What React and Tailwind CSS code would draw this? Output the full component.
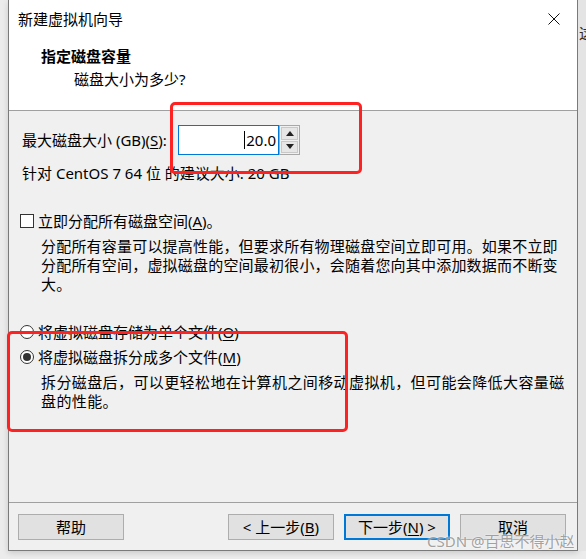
import React from "react";

// accelerator letter, underlined like a Windows dialog
const U = ({ children }) => <span className="underline underline-offset-2">{children}</span>;

const Radio = ({ checked }) => (
  <span className="w-[14px] h-[14px] rounded-full border border-[#333] bg-white flex items-center justify-center shrink-0">
    {checked && <span className="w-[8px] h-[8px] rounded-full bg-[#333]"></span>}
  </span>
);

const Btn = ({ children, primary }) => (
  <button
    className={
      primary
        ? "w-[106px] h-[26px] bg-[#e1e1e1] border-2 border-[#0078d7] flex items-center justify-center leading-none"
        : "w-[106px] h-[26px] bg-[#e1e1e1] border border-[#adadad] flex items-center justify-center leading-none"
    }
  >
    {children}
  </button>
);

export default function App() {
  return (
    <div className="relative w-[586px] h-[559px] overflow-hidden bg-[#ececec] font-['Noto_Sans','Noto_Sans_CJK_SC',sans-serif] text-[15px] text-black">
      <div className="flex">
        {/* dialog window */}
        <div className="ml-[8px] w-[570px] h-[551px] flex flex-col border-x border-b border-[#7a7a7a] shadow-[0_2px_6px_rgba(0,0,0,0.15)]">
          {/* header */}
          <div className="h-[111px] bg-white border-b border-[#a0a0a0]">
            <div className="h-[38px] flex items-center justify-between pl-[9px] pr-[17px]">
              <span className="leading-[20px]">新建虚拟机向导</span>
              <svg width="12" height="12" viewBox="0 0 12 12">
                <path d="M0.5 0.5L11.5 11.5M11.5 0.5L0.5 11.5" stroke="#111" strokeWidth="1" />
              </svg>
            </div>
            <div className="pl-[32px] mt-[8px] font-bold leading-[20px]">指定磁盘容量</div>
            <div className="pl-[65px] mt-[3px] leading-[20px]">磁盘大小为多少?</div>
          </div>

          {/* body */}
          <div className="flex-1 bg-[#f0f0f0]">
            <div className="mt-[14px] pl-[13px] flex items-center h-[30px]">
              <span className="w-[156px] leading-[20px] whitespace-nowrap">
                最大磁盘大小 (GB)(<U>S</U>):
              </span>
              <div className="w-[101px] h-[30px] bg-white border border-[#0078d7] flex items-center justify-end pr-[2px]">
                <span className="w-px h-[18px] bg-black mr-[1px]"></span>
                <span className="leading-none">20.0</span>
              </div>
              <div className="w-[21px] h-[30px] border border-[#a8a8a8] bg-[#f0f0f0] flex flex-col p-px gap-px">
                <div className="flex-1 bg-[#e6e6e6] border border-[#c8c8c8] flex items-center justify-center">
                  <svg width="8" height="5" viewBox="0 0 8 5"><path d="M0 5L4 0L8 5Z" fill="#222" /></svg>
                </div>
                <div className="flex-1 bg-[#e6e6e6] border border-[#c8c8c8] flex items-center justify-center">
                  <svg width="8" height="5" viewBox="0 0 8 5"><path d="M0 0L4 5L8 0Z" fill="#222" /></svg>
                </div>
              </div>
            </div>

            <div className="mt-[8px] pl-[13px] leading-[20px]">针对 CentOS 7 64 位 的建议大小: 20 GB</div>

            <div className="mt-[28px] pl-[11px] h-[20px] flex items-center gap-[4px]">
              <span className="w-[14px] h-[14px] border border-[#333] bg-white shrink-0"></span>
              <span className="leading-[20px]">立即分配所有磁盘空间(<U>A</U>)。</span>
            </div>
            <div className="mt-[6px] pl-[32px] leading-[19px] whitespace-nowrap tracking-[0.2px]">
              分配所有容量可以提高性能，但要求所有物理磁盘空间立即可用。如果不立即
              <br />
              分配所有空间，虚拟磁盘的空间最初很小，会随着您向其中添加数据而不断变
              <br />
              大。
            </div>

            <div className="mt-[28px] pl-[11px] h-[20px] flex items-center gap-[4px]">
              <Radio />
              <span className="leading-[20px]">将虚拟磁盘存储为单个文件(<U>O</U>)</span>
            </div>
            <div className="mt-[5px] pl-[11px] h-[20px] flex items-center gap-[4px]">
              <Radio checked />
              <span className="leading-[20px]">将虚拟磁盘拆分成多个文件(<U>M</U>)</span>
            </div>
            <div className="mt-[6px] pl-[32px] leading-[19px] whitespace-nowrap tracking-[0.4px]">
              拆分磁盘后，可以更轻松地在计算机之间移动虚拟机，但可能会降低大容量磁
              <br />
              盘的性能。
            </div>
          </div>

          {/* footer */}
          <div className="h-[48px] bg-[#f0f0f0] border-t border-[#a0a0a0] pt-[11px] pl-[9px] pr-[11px] flex items-start">
            <Btn>帮助</Btn>
            <div className="ml-auto flex gap-[10px]">
              <Btn>&lt; 上一步(<U>B</U>)</Btn>
              <Btn primary>下一步(<U>N</U>) &gt;</Btn>
              <Btn>取消</Btn>
            </div>
          </div>
        </div>

        {/* window behind, clipped */}
        <div className="flex-1 bg-[#e4e4e4] h-[551px] overflow-hidden pt-[22px] pl-px">
          <span className="text-[#3a2a10] leading-[20px]">这</span>
        </div>
      </div>

      {/* annotation boxes */}
      <div className="absolute left-[170px] top-[102px] w-[192px] h-[72px] border-[3px] border-[#ff2222] rounded-[5px]"></div>
      <div className="absolute left-[7px] top-[331px] w-[341px] h-[101px] border-[3px] border-[#ff2222] rounded-[5px]"></div>

      {/* watermark */}
      <div className="absolute left-[427px] top-[531px] leading-[20px] text-[15px] text-[#8a8a8a]/80 whitespace-nowrap [text-shadow:0_0_2px_#fff]">
        CSDN @百思不得小赵
      </div>
    </div>
  );
}
